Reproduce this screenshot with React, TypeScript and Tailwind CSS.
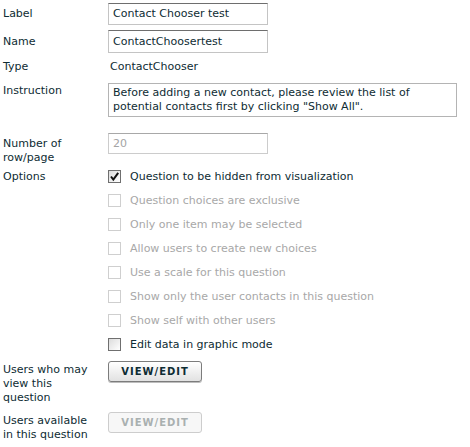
import React from 'react';

const OPTIONS: { label: string; checked?: boolean; disabled?: boolean }[] = [
  { label: 'Question to be hidden from visualization', checked: true },
  { label: 'Question choices are exclusive', disabled: true },
  { label: 'Only one item may be selected', disabled: true },
  { label: 'Allow users to create new choices', disabled: true },
  { label: 'Use a scale for this question', disabled: true },
  { label: 'Show only the user contacts in this question', disabled: true },
  { label: 'Show self with other users', disabled: true },
  { label: 'Edit data in graphic mode' },
];

function Checkbox({ checked, disabled }: { checked?: boolean; disabled?: boolean }) {
  return (
    <span
      className={`flex h-[13px] w-[13px] shrink-0 items-center justify-center border ${
        disabled
          ? 'border-[#cfcfcf] bg-white'
          : 'border-[#6f6f6f] bg-gradient-to-br from-[#dcdcdc] to-white'
      }`}
    >
      {checked && (
        <svg viewBox="0 0 11 11" className="h-[11px] w-[11px]">
          <path d="M2 5.5 L4.3 8.5 L9.2 1.8" fill="none" stroke="#111" strokeWidth="2" />
        </svg>
      )}
    </span>
  );
}

function Button({ disabled }: { disabled?: boolean }) {
  return (
    <button
      className={`h-[21px] w-[94px] shrink-0 rounded-[3px] border text-[10px] font-bold tracking-[1px] ${
        disabled
          ? 'border-[#cdcdcd] bg-[#f7f7f7] text-[#a9b0b0]'
          : 'border-[#7c7c7c] bg-gradient-to-b from-white to-[#e2e2e2] text-[#0e2c33] shadow-[0_1px_0_#bdbdbd]'
      }`}
    >
      VIEW/EDIT
    </button>
  );
}

export default function App() {
  return (
    <div
      className="min-h-screen w-[470px] bg-white pl-[3px] text-[11px] leading-[14px] text-[#0e2c33]"
      style={{ fontFamily: '"DejaVu Sans", Verdana, sans-serif' }}
    >
      {/* Label */}
      <div className="flex items-center pt-[3px]">
        <div className="w-[105px]">Label</div>
        <div className="flex h-[22px] w-[160px] items-center border border-[#c4c4c4] border-t-[#6e6e6e] px-[4px]">
          Contact Chooser test
        </div>
      </div>

      {/* Name */}
      <div className="mt-[5px] flex items-center">
        <div className="w-[105px]">Name</div>
        <div className="flex h-[23px] w-[160px] items-center border border-[#c4c4c4] border-t-[#6e6e6e] px-[4px]">
          ContactChoosertest
        </div>
      </div>

      {/* Type */}
      <div className="mt-[5px] flex h-[18px] items-center">
        <div className="w-[105px]">Type</div>
        <div className="pl-[2px]">ContactChooser</div>
      </div>

      {/* Instruction */}
      <div className="mt-[7px] flex">
        <div className="w-[105px] pt-[1px]">Instruction</div>
        <div className="h-[34px] w-[349px] border border-[#b4b4b4] px-[4px] pt-[2px]">
          Before adding a new contact, please review the list of potential contacts first by clicking "Show All".
        </div>
      </div>

      {/* Number of row/page */}
      <div className="mt-[16px] flex h-[21px]">
        <div className="w-[105px] pt-[4px]">
          Number of
          <br />
          row/page
        </div>
        <div className="flex h-[21px] w-[160px] items-center border border-[#cccccc] border-t-[#a8a8a8] px-[4px] text-[#a4a4a4]">
          20
        </div>
      </div>

      {/* Options */}
      <div className="mt-[16px] flex">
        <div className="w-[105px]">Options</div>
        <div className="flex flex-col gap-[11px]">
          {OPTIONS.map((o) => (
            <div key={o.label} className="flex h-[13px] items-center gap-[9px]">
              <Checkbox checked={o.checked} disabled={o.disabled} />
              <span className={o.disabled ? 'text-[#a8a8a8]' : ''}>{o.label}</span>
            </div>
          ))}
        </div>
      </div>

      {/* Users who may view */}
      <div className="mt-[10px] flex">
        <div className="w-[105px] pt-[2px]">
          Users who may
          <br />
          view this
          <br />
          question
        </div>
        <Button />
      </div>

      {/* Users available */}
      <div className="mt-[7px] flex">
        <div className="w-[105px] pt-[2px]">
          Users available
          <br />
          in this question
        </div>
        <Button disabled />
      </div>
    </div>
  );
}
